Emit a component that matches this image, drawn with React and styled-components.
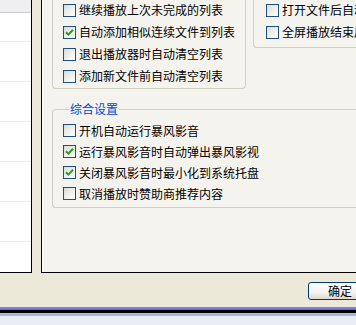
import React from "react";
import styled, { createGlobalStyle } from "styled-components";

const Global = createGlobalStyle`
  html, body { margin: 0; padding: 0; background: #ECE9D8; }
  body { overflow: hidden; }
  * { box-sizing: border-box; }
`;

const Screen = styled.div`
  width: 356px;
  height: 325px;
  overflow: hidden;
  background: #ECE9D8;
  display: flex;
  flex-direction: column;
  font-family: "Noto Sans CJK SC", "Noto Sans", sans-serif;
  font-size: 12px;
  color: #000;
`;

const Main = styled.div`
  display: flex;
  height: 273px;
  gap: 9px;
`;

const ListPanel = styled.div`
  width: 32px;
  flex: none;
  background: #fff;
  border-right: 1px solid #000;
  border-bottom: 1px solid #000;
  display: flex;
  flex-direction: column;
`;

const ListHeader = styled.div`
  height: 13px;
  flex: none;
  background: #EFEFF1;
  border-bottom: 1px solid #C9C9CC;
  margin-bottom: 28px;
`;

const ListRow = styled.div`
  height: 40px;
  flex: none;
  border-top: 1px solid #ECECEC;
`;

const Page = styled.div`
  flex: 1;
  min-width: 0;
  background: #F4F3EE;
  border-left: 1px solid #000;
  border-bottom: 1px solid #000;
  box-shadow: inset 1px 0 0 #FFFFFF;
  padding-left: 10px;
  display: flex;
  flex-direction: column;
`;

const TopRow = styled.div`
  display: flex;
  align-items: flex-start;
  gap: 7px;
`;

const OpenGroup = styled.div`
  border: 1px solid #D0D0BF;
  border-top: none;
  border-radius: 0 0 4px 4px;
  padding: 0 0 ${(p) => p.$pb}px ${(p) => p.$pl}px;
  ${(p) => (p.$width ? `width: ${p.$width}px; flex: none;` : `flex: 1; border-right: none; border-radius: 0 0 0 4px;`)}
`;

const Rows = styled.div`
  display: flex;
  flex-direction: column;
  margin-top: ${(p) => p.$mt || 0}px;
`;

const Row = styled.label`
  display: flex;
  align-items: center;
  gap: 3px;
  height: ${(p) => p.$h}px;
  white-space: nowrap;
  line-height: 14px;
`;

const Box = styled.span`
  width: 13px;
  height: 13px;
  flex: none;
  border: 1px solid #1C5180;
  background: linear-gradient(135deg, #DCDCD5 0%, #F1F1EC 55%, #FFFFFF 100%);
  display: flex;
  align-items: center;
  justify-content: center;
`;

const Fieldset = styled.fieldset`
  margin: 12px 0 0 0;
  padding: 3px 0 3px 10px;
  border: 1px solid #D0D0BF;
  border-right: none;
  border-radius: 4px 0 0 4px;
  min-width: 0;
`;

const Legend = styled.legend`
  color: #0046D5;
  margin-left: 6px;
  padding: 0 1px;
  line-height: 16px;
  font-size: 12px;
`;

const Footer = styled.div`
  height: 34px;
  flex: none;
  display: flex;
  justify-content: flex-end;
  align-items: flex-start;
  padding-top: 9px;
`;

const Button = styled.button`
  width: 64px;
  height: 18px;
  margin-right: -16px;
  border: 1px solid #003C74;
  border-radius: 3px;
  background: linear-gradient(#FFFFFF 0%, #F4F4F0 60%, #DCD8CE 100%);
  font-family: inherit;
  font-size: 12px;
  color: #000;
  padding: 0;
  line-height: 16px;
`;

const Taskbar = styled.div`
  flex: 1;
  display: flex;
  flex-direction: column;
`;

const Band = styled.div`
  height: ${(p) => p.$h}px;
  flex: ${(p) => (p.$grow ? 1 : "none")};
  background: ${(p) => p.$c};
`;

const Check = () => (
  <svg width="9" height="9" viewBox="0 0 9 9">
    <path d="M1 4.2 L3.4 6.6 L8 1.8" fill="none" stroke="#21A121" strokeWidth="2" />
  </svg>
);

const CheckRow = ({ checked, children, h }) => (
  <Row $h={h}>
    <Box>{checked && <Check />}</Box>
    <span>{children}</span>
  </Row>
);

export default function App() {
  return (
    <>
      <Global />
      <Screen>
        <Main>
          <ListPanel>
            <ListHeader />
            {[0, 1, 2, 3, 4, 5].map((i) => (
              <ListRow key={i} />
            ))}
          </ListPanel>
          <Page>
            <TopRow>
              <OpenGroup $width={194} $pl={10} $pb={1}>
                <Rows $mt={-1}>
                  <CheckRow h={22}>继续播放上次未完成的列表</CheckRow>
                  <CheckRow h={22} checked>自动添加相似连续文件到列表</CheckRow>
                  <CheckRow h={22}>退出播放器时自动清空列表</CheckRow>
                  <CheckRow h={22}>添加新文件前自动清空列表</CheckRow>
                </Rows>
              </OpenGroup>
              <OpenGroup $pl={12} $pb={4}>
                <Rows $mt={-1}>
                  <CheckRow h={22}>打开文件后自动播放</CheckRow>
                  <CheckRow h={22}>全屏播放结束后退出全屏</CheckRow>
                </Rows>
              </OpenGroup>
            </TopRow>
            <Fieldset>
              <Legend>综合设置</Legend>
              <Rows>
                <CheckRow h={21}>开机自动运行暴风影音</CheckRow>
                <CheckRow h={21} checked>运行暴风影音时自动弹出暴风影视</CheckRow>
                <CheckRow h={21} checked>关闭暴风影音时最小化到系统托盘</CheckRow>
                <CheckRow h={21}>取消播放时赞助商推荐内容</CheckRow>
              </Rows>
            </Fieldset>
          </Page>
        </Main>
        <Footer>
          <Button>确定</Button>
        </Footer>
        <Taskbar>
          <Band $h={3} $c="linear-gradient(#8C8CE0, #6464C8)" />
          <Band $h={3} $c="#000" />
          <Band $h={3} $c="#A9B9D2" />
          <Band $grow $c="#E8EEF6" />
        </Taskbar>
      </Screen>
    </>
  );
}
